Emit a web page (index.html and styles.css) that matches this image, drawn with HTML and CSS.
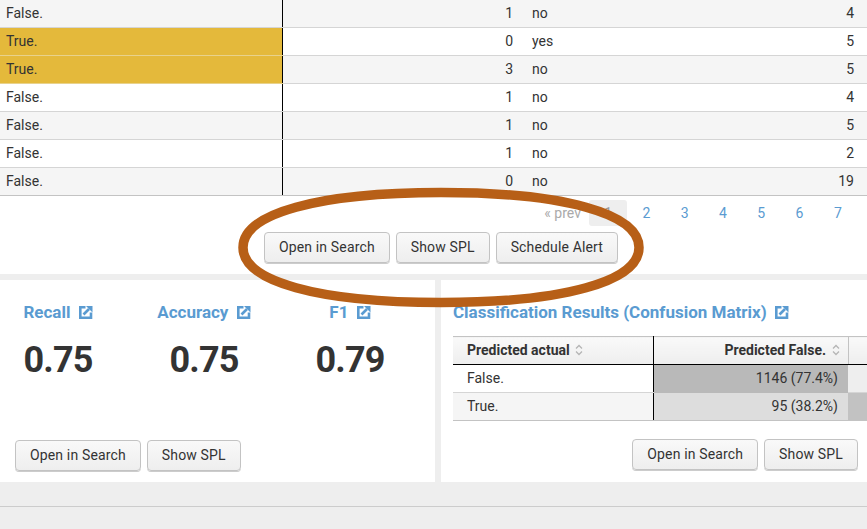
FILE: index.html
```html
<!DOCTYPE html>
<html lang="en">
<head>
    <meta charset="UTF-8">
    <title>Classification Results</title>
    <link rel="stylesheet" href="styles.css">
</head>
<body>
    <svg width="0" height="0" class="defs">
        <symbol id="ext" viewBox="0 0 14 14">
            <path d="M6.500 2.200H1.300v10.500H12V7.500" fill="none" stroke="#5a9bd1" stroke-width="2.600"/>
            <path d="M4.500 9.500L10 4" fill="none" stroke="#5a9bd1" stroke-width="2.600"/>
            <path d="M7 1H13.500V7.500z" fill="#5a9bd1"/>
        </symbol>
        <symbol id="sort" viewBox="0 0 8 12">
            <path d="M1 4.500L4 1.500l3 3M1 7.500l3 3 3-3" fill="none" stroke="#b5b5b5" stroke-width="1.300"/>
        </symbol>
    </svg>

    <section class="results">
        <table class="results-table">
            <colgroup>
                <col class="col-a"><col class="col-b"><col class="col-c"><col>
            </colgroup>
            <tbody>
                <tr><td class="first">False.</td><td class="num">1</td><td class="txt">no</td><td class="num last">4</td></tr>
                <tr><td class="first gold">True.</td><td class="num">0</td><td class="txt">yes</td><td class="num last">5</td></tr>
                <tr><td class="first gold">True.</td><td class="num">3</td><td class="txt">no</td><td class="num last">5</td></tr>
                <tr><td class="first">False.</td><td class="num">1</td><td class="txt">no</td><td class="num last">4</td></tr>
                <tr><td class="first">False.</td><td class="num">1</td><td class="txt">no</td><td class="num last">5</td></tr>
                <tr><td class="first">False.</td><td class="num">1</td><td class="txt">no</td><td class="num last">2</td></tr>
                <tr><td class="first">False.</td><td class="num">0</td><td class="txt">no</td><td class="num last">19</td></tr>
            </tbody>
        </table>
        <div class="pager">
            <span class="prev">« prev</span>
            <span class="page active">1</span>
            <span class="page">2</span>
            <span class="page">3</span>
            <span class="page">4</span>
            <span class="page">5</span>
            <span class="page">6</span>
            <span class="page">7</span>
        </div>
        <div class="actions center">
            <button class="btn">Open in Search</button>
            <button class="btn">Show SPL</button>
            <button class="btn">Schedule Alert</button>
        </div>
    </section>

    <div class="panels">
        <section class="panel metrics-panel">
            <div class="metrics">
                <div class="metric">
                    <h3 class="title">Recall <svg class="ext"><use href="#ext"/></svg></h3>
                    <div class="value">0.75</div>
                </div>
                <div class="metric">
                    <h3 class="title">Accuracy <svg class="ext"><use href="#ext"/></svg></h3>
                    <div class="value">0.75</div>
                </div>
                <div class="metric">
                    <h3 class="title">F1 <svg class="ext"><use href="#ext"/></svg></h3>
                    <div class="value">0.79</div>
                </div>
            </div>
            <div class="actions left">
                <button class="btn">Open in Search</button>
                <button class="btn">Show SPL</button>
            </div>
        </section>
        <section class="panel matrix-panel">
            <h3 class="title">Classification Results (Confusion Matrix) <svg class="ext"><use href="#ext"/></svg></h3>
            <table class="matrix">
                <colgroup>
                    <col class="m-a"><col class="m-b"><col class="m-c">
                </colgroup>
                <thead>
                    <tr>
                        <th class="m-first">Predicted actual <svg class="sort"><use href="#sort"/></svg></th>
                        <th class="m-num">Predicted False. <svg class="sort"><use href="#sort"/></svg></th>
                        <th></th>
                    </tr>
                </thead>
                <tbody>
                    <tr><td class="m-first">False.</td><td class="m-num dark">1146 (77.4%)</td><td class="pale"></td></tr>
                    <tr class="even"><td class="m-first">True.</td><td class="m-num light">95 (38.2%)</td><td class="mid"></td></tr>
                </tbody>
            </table>
            <div class="actions right">
                <button class="btn">Open in Search</button>
                <button class="btn">Show SPL</button>
            </div>
        </section>
    </div>
    <div class="footer"></div>

    <svg class="oval" width="867" height="529">
        <path d="M243 247.500C243 213.400 318.200 192.500 441 192.500C563.800 192.500 639 213.400 639 247.500C639 281.600 563.800 302.500 441 302.500C318.200 302.500 243 281.600 243 247.500Z" fill="none" stroke="#b75f17" stroke-width="9.500"/>
    </svg>
</body>
</html>
```

FILE: styles.css
```css
html, body {
    margin: 0;
    height: 100%;
}
body {
    position: relative;
    overflow: hidden;
    font-family: Roboto, "Liberation Sans", sans-serif;
    font-size: 14px;
    color: #333;
    background-color: #eee;
}
.defs {
    position: absolute;
}
.results {
    height: 274px;
    background-color: #fff;
}
table {
    border-collapse: collapse;
    table-layout: fixed;
}
.results-table {
    width: 100%;
}
.col-a {
    width: 282px;
}
.col-b {
    width: 240px;
}
.col-c {
    width: 200px;
}
.results-table td {
    height: 26px;
    padding: 0 0 1px;
    border-bottom: 1px solid #d5d5d5;
}
.results-table tr:nth-child(odd) {
    background-color: #f5f5f5;
}
.results-table tr:last-child td {
    border-bottom-color: #c3c3c3;
}
.results-table .first {
    padding-left: 6px;
    border-right: 1px solid #000;
}
.results-table .gold {
    background-color: #e4b93b;
    border-bottom-color: #e8d28c;
}
.results-table .num {
    text-align: right;
    padding-right: 9px;
}
.results-table .txt {
    padding-left: 10px;
}
.results-table .last {
    padding-right: 13px;
}
.pager {
    display: flex;
    justify-content: flex-end;
    align-items: center;
    height: 26px;
    margin-top: 4px;
    padding-right: 10px;
}
.prev {
    margin-right: 8px;
    color: #aaa;
}
.page {
    width: 38.300px;
    line-height: 26px;
    text-align: center;
    color: #5a9bd1;
    border-radius: 3px;
}
.page.active {
    color: #999;
    background-color: #eee;
}
.actions {
    display: flex;
    gap: 6px;
}
.actions.center {
    justify-content: center;
    margin-top: 6px;
    padding-left: 15px;
}
.btn {
    height: 31px;
    padding: 0 14px 2px;
    font-family: inherit;
    font-size: 14px;
    letter-spacing: .15px;
    color: #333;
    background: linear-gradient(#f9f9f9, #eee);
    border: 1px solid #c3c3c3;
    border-radius: 4px;
    box-shadow: 0 1px 0 #ccc;
}
.panels {
    display: flex;
    gap: 6px;
    margin-top: 6px;
}
.panel {
    position: relative;
    height: 202px;
    background-color: #fff;
}
.metrics-panel {
    width: 435px;
}
.matrix-panel {
    flex: 1;
    overflow: hidden;
}
.metrics {
    display: grid;
    grid-template-columns: repeat(3, 116px);
    gap: 30px;
}
.metric {
    text-align: center;
}
.title {
    margin: 0;
    padding-top: 23px;
    font-size: 17px;
    line-height: 19px;
    font-weight: 700;
    color: #5a9bd1;
    white-space: nowrap;
}
.ext {
    width: 14px;
    height: 14px;
    margin-left: 4px;
    vertical-align: -1px;
}
.value {
    margin-top: 17px;
    font-size: 36px;
    line-height: 42px;
    font-weight: 700;
    letter-spacing: -.8px;
    color: #333;
}
.actions.left {
    position: absolute;
    left: 15px;
    top: 160px;
}
.matrix-panel .title {
    padding-left: 12px;
}
.matrix {
    width: 480px;
    margin: 14px 0 0 12px;
}
.m-a {
    width: 200px;
}
.m-b {
    width: 195px;
}
.matrix th {
    height: 26px;
    padding: 0 0 1px;
    background: linear-gradient(#f9f9f9, #eee);
    border-top: 1px solid #c3c3c3;
    border-bottom: 1px solid #000;
    border-right: 1px solid #c3c3c3;
    font-weight: 700;
}
.matrix td {
    height: 26px;
    padding: 0 0 1px;
    border-bottom: 1px solid #d5d5d5;
}
.matrix .even td {
    border-bottom-color: #c3c3c3;
}
.matrix .even .m-first {
    background-color: #f5f5f5;
}
.matrix .m-first {
    padding-left: 14px;
    text-align: left;
    border-right: 1px solid #000;
}
.matrix td.m-num {
    text-align: right;
    padding-right: 10px;
}
.matrix th.m-num {
    text-align: right;
    padding-right: 8px;
}
.matrix .dark {
    background-color: #b9b9b9;
    border-bottom-color: #b9b9b9;
}
.matrix .light {
    background-color: #ddd;
}
.matrix .pale {
    background-color: #eee;
}
.matrix .mid {
    background-color: #c2c2c2;
}
.sort {
    width: 8px;
    height: 12px;
    margin-left: 2px;
    vertical-align: -1px;
}
.actions.right {
    position: absolute;
    right: 9px;
    top: 159px;
}
.footer {
    height: 23px;
    margin-top: 24px;
    border-top: 1px solid #ccc;
}
.oval {
    position: absolute;
    left: 0;
    top: 0;
}
```
